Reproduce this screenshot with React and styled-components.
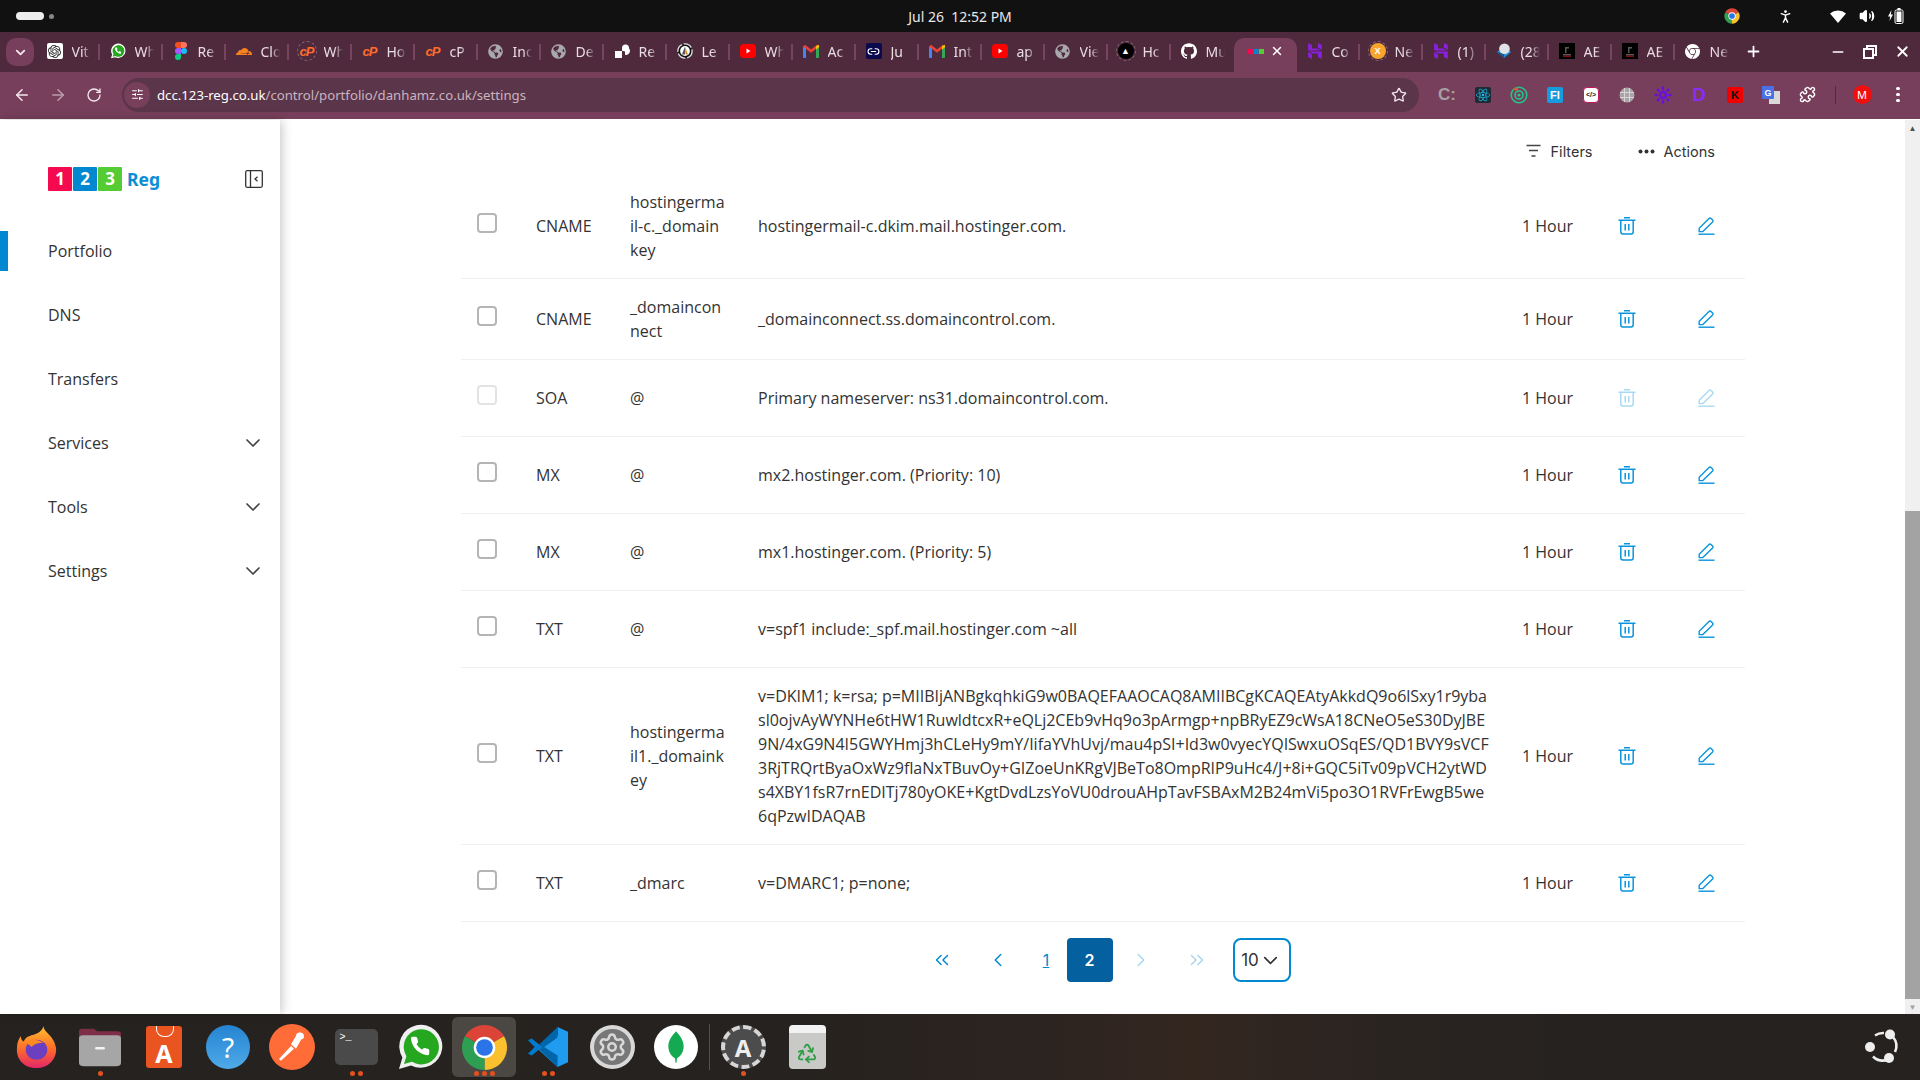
import styled, { createGlobalStyle } from "styled-components"
import { ChevronDown, ChevronLeft, ChevronRight, ChevronsLeft, ChevronsRight, ArrowLeft, ArrowRight, RotateCw, Star, SlidersHorizontal, Plus, Minus, X, Puzzle, Recycle, Settings, Link2, Volume2, PersonStanding, Sun } from "lucide-react"
import { SiOpenai, SiCloudflare, SiGithub, SiHostinger, SiGooglechrome, SiReact } from "react-icons/si"
import { FaGlobeAmericas } from "react-icons/fa"

const GlobalStyle = createGlobalStyle`
    html, body { margin: 0; padding: 0; height: 100%; overflow: hidden; background: #fff; }
    body { font-family: "Open Sans", "Noto Sans", sans-serif; color: #333; }
    * { box-sizing: border-box; }
`

const Screen = styled.div`
    width: 1920px;
    height: 1080px;
    display: flex;
    flex-direction: column;
`

/* ---------- ubuntu top bar ---------- */
const TopBar = styled.div`
    height: 32px;
    background: #111;
    color: #e8e8e8;
    display: grid;
    grid-template-columns: 1fr auto 1fr;
    align-items: center;
    padding: 0 16px;
    font: 14px "Noto Sans", sans-serif;
`
const Workspaces = styled.div`
    display: flex;
    align-items: center;
    gap: 5px;
`
const WorkspacePill = styled.span`
    width: 28px;
    height: 8px;
    border-radius: 4px;
    background: #eee;
`
const WorkspaceDot = styled.span`
    width: 5px;
    height: 5px;
    border-radius: 50%;
    background: #888;
`
const Clock = styled.div`
    white-space: pre;
`
const Tray = styled.div`
    display: flex;
    align-items: center;
    justify-content: flex-end;
    color: #fff;
`
const TrayItem = styled.span`
    display: flex;
    margin-left: ${p => p.$gap}px;
`

/* ---------- chrome tabs ---------- */
const TabStrip = styled.div`
    height: 40px;
    background: #4f2a3d;
    display: flex;
    align-items: flex-end;
    padding-left: 6px;
`
const TabMenu = styled.div`
    width: 28px;
    height: 28px;
    margin: 0 2.5px 6px 0;
    border-radius: 10px;
    background: #773f5b;
    color: #f2e6ec;
    display: flex;
    align-items: center;
    justify-content: center;
`
const Tab = styled.div`
    position: relative;
    width: 63px;
    height: 34px;
    flex: none;
    display: flex;
    align-items: center;
    padding: ${p => (p.$active ? "0 12px 8px 14px" : "0 9px 8px 10px")};
    gap: ${p => (p.$active ? 6 : 9)}px;
    color: #e9dde3;
    font: 14px "Noto Sans", sans-serif;
    border-radius: ${p => (p.$active ? "10px 10px 0 0" : "0")};
    background: ${p => (p.$active ? "#773f5b" : "transparent")};
    &::after {
        content: "";
        display: ${p => (p.$active || p.$last ? "none" : "block")};
        position: absolute;
        right: 0;
        top: 6px;
        height: 16px;
        width: 1.5px;
        background: #774560;
    }
`
const TabTitle = styled.span`
    overflow: hidden;
    white-space: nowrap;
    flex: 1;
    min-width: 0;
    mask-image: linear-gradient(90deg, #000 55%, transparent);
`
const TabClose = styled.span`
    flex: none;
    display: flex;
`
const Fav = styled.span`
    width: 16px;
    height: 16px;
    flex: none;
    display: flex;
    align-items: center;
    justify-content: center;
    color: ${p => p.$color || "#fff"};
    background: ${p => p.$bg || "transparent"};
    border-radius: ${p => (p.$ring ? "50%" : "2px")};
    outline: ${p => (p.$ring ? "1.5px dashed #8b6a7c" : "none")};
    outline-offset: 1px;
    font: bold 9px "Liberation Sans", sans-serif;
`
const CpanelText = styled.span`
    font: italic bold 13px "Liberation Sans", sans-serif;
    letter-spacing: -1px;
    color: #ff6c2c;
`
const NewTab = styled.div`
    width: 32px;
    display: flex;
    justify-content: center;
    color: #fff;
    padding-bottom: 12px;
`
const WindowControls = styled.div`
    margin-left: auto;
    display: flex;
    align-items: center;
    color: #fff;
    padding: 0 2px 12px 0;
`
const WindowButton = styled.span`
    width: 32px;
    display: flex;
    justify-content: center;
`

/* ---------- chrome toolbar ---------- */
const Toolbar = styled.div`
    height: 47px;
    background: #773f5b;
    display: flex;
    align-items: center;
    padding: 0 4px 2px;
    color: #f3e8ed;
`
const NavButton = styled.span`
    width: 36px;
    display: flex;
    justify-content: center;
    opacity: ${p => (p.$dim ? 0.55 : 1)};
`
const Omnibox = styled.div`
    flex: 1;
    height: 34px;
    margin: 0 10px;
    border-radius: 17px;
    background: #5b354a;
    display: flex;
    align-items: center;
    padding: 0 12px 0 2px;
    font: 13.2px "Noto Sans", sans-serif;
    color: #c9b4bf;
`
const SiteInfo = styled.span`
    width: 26px;
    height: 26px;
    border-radius: 50%;
    background: #773f5b;
    display: flex;
    align-items: center;
    justify-content: center;
    color: #fff;
    margin-right: 7px;
`
const UrlHost = styled.span`
    color: #fff;
`
const StarWrap = styled.span`
    margin-left: auto;
    display: flex;
`
const ExtSlot = styled.span`
    width: 36px;
    display: flex;
    justify-content: center;
    align-items: center;
`
const ExtBox = styled.span`
    width: 16px;
    height: 16px;
    display: flex;
    align-items: center;
    justify-content: center;
    background: ${p => p.$bg || "transparent"};
    color: ${p => p.$color || "#fff"};
    border-radius: ${p => p.$radius || 2}px;
    border: ${p => (p.$border ? `1.5px solid ${p.$border}` : "none")};
    font: bold ${p => p.$size || 10}px "Liberation Sans", sans-serif;
    white-space: nowrap;
`
const ToolbarSep = styled.span`
    width: 1px;
    height: 18px;
    margin: 0 8px 0 10px;
    background: #4f2a3d;
`
const Avatar = styled.span`
    width: 19px;
    height: 19px;
    border-radius: 50%;
    background: #f00f0f;
    color: #fff;
    font: 11px "Noto Sans", sans-serif;
    display: flex;
    align-items: center;
    justify-content: center;
`
const MoreDots = styled.span`
    display: flex;
    flex-direction: column;
    gap: 2.5px;
    & > i {
        width: 3.5px;
        height: 3.5px;
        border-radius: 50%;
        background: #fff;
    }
`

/* ---------- page ---------- */
const Page = styled.div`
    flex: 1;
    min-height: 0;
    display: flex;
    background: #fff;
    border-top: 1px solid #fff;
`
const Sidebar = styled.aside`
    width: 280px;
    flex: none;
    background: #fff;
    box-shadow: 2px 0 10px rgba(0, 0, 0, 0.22);
    padding-top: 46px;
    z-index: 1;
`
const SidebarHead = styled.div`
    display: flex;
    align-items: center;
    justify-content: space-between;
    padding: 0 17px 0 48px;
    height: 25px;
    margin-bottom: 28px;
`
const Logo = styled.div`
    display: flex;
    align-items: center;
    gap: 1px;
`
const LogoBox = styled.span`
    width: 24px;
    height: 24px;
    background: ${p => p.$bg};
    color: #fff;
    font: bold 17px "Noto Sans", sans-serif;
    border-radius: 1px;
    display: flex;
    align-items: center;
    justify-content: center;
`
const LogoWord = styled.span`
    margin-left: 4px;
    color: #0a8ed6;
    font: bold 17.5px "Noto Sans", sans-serif;
`
const NavItem = styled.div`
    position: relative;
    height: 64px;
    display: flex;
    align-items: center;
    justify-content: space-between;
    padding: 0 15px 0 48px;
    font-size: 16px;
    color: #333;
    &::before {
        content: "";
        display: ${p => (p.$active ? "block" : "none")};
        position: absolute;
        left: 0;
        top: 12px;
        width: 8px;
        height: 40px;
        background: #0288d1;
    }
`
const Main = styled.main`
    flex: 1;
    min-width: 0;
    padding: 0 160px 0 181px;
`
const FilterBar = styled.div`
    height: 54px;
    padding: 8px 30px 0 0;
    display: flex;
    align-items: center;
    justify-content: flex-end;
    gap: 45px;
    font: 14.5px Inter, sans-serif;
    color: #333;
`
const FilterItem = styled.span`
    display: flex;
    align-items: center;
    gap: ${p => p.$gap}px;
`
const Row = styled.div`
    display: grid;
    grid-template-columns: 75px 94px 128px 764px 64px 81px 79px;
    align-items: center;
    border-bottom: 1px solid #f0f0f0;
    padding: 16px 0;
    font-size: 16px;
    line-height: 24px;
    color: #333;
`
const CheckCell = styled.div`
    padding: 0 0 7px 16px;
    display: flex;
`
const Check = styled.span`
    width: 20px;
    height: 20px;
    border-radius: 4px;
    border: 2px solid ${p => (p.$off ? "#e3e3e3" : "#b5b5b5")};
    background: #fff;
`
const NameCell = styled.div`
    width: 96px;
    word-break: break-all;
`
const ValueCell = styled.div`
    width: 734px;
    word-break: break-all;
`
const ActionCell = styled.div`
    height: 44px;
    display: flex;
    align-items: center;
    justify-content: center;
    color: #0a94dd;
    opacity: ${p => (p.$off ? 0.35 : 1)};
`
const Pager = styled.nav`
    margin-top: 16px;
    padding-right: 2px;
    display: flex;
    justify-content: center;
    align-items: center;
    height: 44px;
    font: 17px Inter, sans-serif;
`
const PageArrow = styled.span`
    width: 56px;
    display: flex;
    justify-content: center;
    color: #0288d1;
    opacity: ${p => (p.$off ? 0.35 : 1)};
`
const PageLink = styled.span`
    width: 41px;
    text-align: center;
    color: #0288d1;
    font-size: 16px;
    text-decoration: underline;
`
const PageCurrent = styled.span`
    width: 46px;
    height: 44px;
    background: #04609f;
    color: #fff;
    font-size: 16px;
    font-weight: 600;
    border-radius: 4px;
    display: flex;
    align-items: center;
    justify-content: center;
`
const PageSize = styled.span`
    width: 58px;
    height: 44px;
    margin-left: 8px;
    border: 2px solid #0288d1;
    border-radius: 8px;
    display: flex;
    align-items: center;
    justify-content: center;
    color: #333;
`
const Scrollbar = styled.div`
    width: 15px;
    flex: none;
    background: #f0f0f0;
    display: flex;
    flex-direction: column;
    align-items: center;
`
const ScrollArrow = styled.span`
    height: 15px;
    margin-top: ${p => (p.$bottom ? "auto" : 0)};
    display: flex;
    align-items: center;
    color: ${p => p.$color || "#505050"};
    font-size: 8px;
`
const ScrollThumb = styled.span`
    width: 100%;
    margin-top: 376px;
    height: 488px;
    background: #a3a3a3;
`

/* ---------- dock ---------- */
const Dock = styled.div`
    height: 66px;
    flex: none;
    display: flex;
    align-items: center;
    padding: 0 18px 0 4px;
    background: linear-gradient(90deg, #25221f 0%, #25221f 40%, #2d2420 55%, #33261f 62%, #2a2421 72%, #25221f 85%);
`
const DockSlot = styled.div`
    position: relative;
    width: 64px;
    height: 60px;
    display: flex;
    align-items: center;
    justify-content: center;
    border-radius: 6px;
    background: ${p => (p.$hover ? "#4b4843" : "transparent")};
`
const DockDots = styled.span`
    position: absolute;
    bottom: 1px;
    left: 0;
    right: 0;
    display: flex;
    justify-content: center;
    gap: 3px;
    & > i {
        width: 5px;
        height: 5px;
        border-radius: 50%;
        background: #e2521f;
    }
`
const DockSep = styled.span`
    width: 1px;
    height: 46px;
    margin: 0 1px;
    background: #55514c;
`
const UbuntuWrap = styled.div`
    margin-left: auto;
    display: flex;
`
const TerminalIcon = styled.span`
    width: 43px;
    height: 36px;
    border-radius: 5px;
    background: #4a4a4a;
    color: #fff;
    font: 10px "Liberation Mono", monospace;
    padding: 3px 0 0 5px;
`
const HelpIcon = styled.span`
    width: 44px;
    height: 44px;
    border-radius: 50%;
    background: linear-gradient(#2583d2, #4faae8);
    color: #fff;
    font: 28px "Noto Sans", sans-serif;
    display: flex;
    align-items: center;
    justify-content: center;
`
const UpdaterIcon = styled.span`
    width: 45px;
    height: 44px;
    border-radius: 50%;
    border: 4px dashed #d6d6d6;
    background: #4c4c4c;
    color: #eee;
    font: bold 24px "Noto Sans", sans-serif;
    display: flex;
    align-items: center;
    justify-content: center;
`
const AppCenterIcon = styled.span`
    position: relative;
    width: 36px;
    height: 42px;
    border-radius: 3px;
    background: #e95420;
    color: #fff;
    font: bold 25px "Noto Sans", sans-serif;
    display: flex;
    align-items: flex-end;
    justify-content: center;
    line-height: 30px;
    &::before {
        content: "";
        position: absolute;
        top: 0;
        left: 10px;
        width: 16px;
        height: 10px;
        border: 1.5px solid #fff;
        border-top: none;
        border-radius: 0 0 8px 8px;
    }
`
const GearIcon = styled.span`
    width: 45px;
    height: 44px;
    border-radius: 50%;
    background: #777;
    border: 4px solid #d8d8d8;
    color: #d8d8d8;
    display: flex;
    align-items: center;
    justify-content: center;
`
const TrashIcon = styled.span`
    width: 37px;
    height: 44px;
    border-radius: 4px;
    background: linear-gradient(#f2f2f2 0 18%, #c9c9c7 18%);
    color: #2f9e44;
    display: flex;
    align-items: flex-end;
    justify-content: center;
    padding-bottom: 5px;
`

/* ---------- drawings ---------- */
const polar = (r, a) => [24 + r * Math.cos((a * Math.PI) / 180), 24 + r * Math.sin((a * Math.PI) / 180)]
const sector = (r, a0, a1) => {
    const [x0, y0] = polar(r, a0)
    const [x1, y1] = polar(r, a1)
    return `M24 24L${x0} ${y0}A${r} ${r} 0 0 1 ${x1} ${y1}Z`
}

function ChromeMark({ size }) {
    return (
        <svg width={size} height={size} viewBox="0 0 48 48">
            <path d={sector(23, -150, -30)} fill="#db4437" />
            <path d={sector(23, -30, 90)} fill="#fbc02d" />
            <path d={sector(23, 90, 210)} fill="#2e9e52" />
            <circle cx="24" cy="24" r="11" fill="#fff" />
            <circle cx="24" cy="24" r="8.5" fill="#2a74e8" />
        </svg>
    )
}

function WhatsappMark({ size, ring }) {
    return (
        <svg width={size} height={size} viewBox="0 0 48 48">
            <path d="M3 46l3.4-11.6A21.5 21.5 0 1 1 15 42.4z" fill={ring ? "#f0f0f0" : "#fff"} />
            <path d="M8 41l2.4-7.8A17.6 17.6 0 1 1 16 38.8z" fill="#25a81f" />
            <g transform="translate(13 12) scale(0.92)">
                <path d="M22 16.92v3a2 2 0 0 1-2.18 2 19.79 19.79 0 0 1-8.63-3.07 19.5 19.5 0 0 1-6-6 19.79 19.79 0 0 1-3.07-8.67A2 2 0 0 1 4.11 2h3a2 2 0 0 1 2 1.72 12.84 12.84 0 0 0 .7 2.81 2 2 0 0 1-.45 2.11L8.09 9.91a16 16 0 0 0 6 6l1.27-1.27a2 2 0 0 1 2.11-.45 12.84 12.84 0 0 0 2.81.7A2 2 0 0 1 22 16.92z" fill="#fff" />
            </g>
        </svg>
    )
}

function FigmaMark() {
    return (
        <svg width="12" height="18" viewBox="0 0 12 18">
            <path d="M3 0h3v6H3a3 3 0 0 1 0-6z" fill="#f24e1e" />
            <path d="M6 0h3a3 3 0 0 1 0 6H6z" fill="#ff7262" />
            <path d="M3 6h3v6H3a3 3 0 0 1 0-6z" fill="#a259ff" />
            <circle cx="9" cy="9" r="3" fill="#1abcfe" />
            <path d="M3 12h3v3a3 3 0 1 1-3-3z" fill="#0acf83" />
        </svg>
    )
}

function RenderMark() {
    return (
        <svg width="16" height="16" viewBox="0 0 16 16">
            <rect x="1" y="8" width="7" height="7" fill="#fff" />
            <path d="M8 8a4 4 0 1 1 3 3.8V8z" fill="#fff" />
            <circle cx="11.5" cy="5" r="3.5" fill="#fff" />
        </svg>
    )
}

function LeMark() {
    return (
        <svg width="18" height="18" viewBox="0 0 18 18">
            <circle cx="9" cy="9" r="8" fill="#111" stroke="#ddd" strokeWidth="1.5" strokeDasharray="10 2" />
            <circle cx="9" cy="9" r="5.5" fill="#fff" />
            <path d="M9 4l3.5 9h-3z" fill="#d98a2b" />
            <path d="M9 4l-3.5 9h3.5z" fill="#555" />
        </svg>
    )
}

function YoutubeMark() {
    return (
        <svg width="16" height="16" viewBox="0 0 16 16">
            <rect y="1" width="16" height="14" rx="3.5" fill="#f00" />
            <path d="M6.5 5.5l4 2.5-4 2.5z" fill="#fff" />
        </svg>
    )
}

function GmailMark() {
    return (
        <svg width="16" height="14" viewBox="0 0 16 14">
            <path d="M0 2.5h3V14H1a1 1 0 0 1-1-1z" fill="#4285f4" />
            <path d="M13 2.5h3V13a1 1 0 0 1-1 1h-2z" fill="#34a853" />
            <path d="M0 2.5L2 .8 8 5.5 14 .8 16 2.5 8 8.8z" fill="#ea4335" />
            <path d="M13 2l3-1.2v2.4L13 5.6z" fill="#fbbc04" />
        </svg>
    )
}

function BlocksMark() {
    return (
        <svg width="16" height="5" viewBox="0 0 16 5">
            <rect width="5" height="5" fill="#f50a4f" />
            <rect x="5.5" width="5" height="5" fill="#0288d1" />
            <rect x="11" width="5" height="5" fill="#55cc33" />
        </svg>
    )
}

function SphereMark() {
    return (
        <svg width="18" height="18" viewBox="0 0 18 18">
            <path d="M1 10l8 7 8-7-3-2H4z" fill="#1f8fd8" />
            <path d="M1 10l8 7V12z" fill="#16567f" />
            <circle cx="9.5" cy="6.5" r="6" fill="#dfe3e6" />
        </svg>
    )
}

function AeMark() {
    return (
        <svg width="16" height="16" viewBox="0 0 16 16">
            <rect width="16" height="16" fill="#000" />
            <path d="M4 11h8v1.5H4zM6 4h1.5v6H6zM7.5 4H10v1.5H7.5z" fill="#5a5a5a" />
            <rect x="4" y="12.5" width="8" height="1.5" fill="#7a1010" />
        </svg>
    )
}

function RestoreMark() {
    return (
        <svg width="14" height="14" viewBox="0 0 14 14" fill="none" stroke="#fff" strokeWidth="2">
            <path d="M4 4V1h9v9h-3" />
            <rect x="1" y="4" width="9" height="9" />
        </svg>
    )
}

function WifiMark() {
    return (
        <svg width="16" height="13" viewBox="0 0 16 13">
            <path d="M0 3.6A12 12 0 0 1 16 3.6L8 13z" fill="#fff" />
        </svg>
    )
}

function BatteryMark() {
    return (
        <svg width="17" height="16" viewBox="0 0 17 16" fill="none">
            <path d="M4.5 2L1 8.5h2.2L2.5 13 6 6.5H3.8z" fill="#fff" />
            <rect x="8" y="2" width="8" height="13.5" rx="1.5" stroke="#fff" />
            <rect x="10.5" y="0" width="3" height="2" fill="#fff" />
            <rect x="9.5" y="3.5" width="5" height="10.5" fill="#fff" />
        </svg>
    )
}

function TargetMark() {
    return (
        <svg width="18" height="18" viewBox="0 0 18 18" fill="none">
            <circle cx="9" cy="9" r="7.8" stroke="#1fc78a" strokeWidth="1.6" />
            <circle cx="9" cy="9" r="4" stroke="#1fc78a" strokeWidth="1.6" />
            <circle cx="9" cy="9" r="1.6" fill="#1fc78a" />
            <path d="M3 3.5a8 8 0 0 1 5-2.3V5z" fill="#e4572e" />
        </svg>
    )
}

function GridGlobeMark() {
    return (
        <svg width="16" height="16" viewBox="0 0 16 16" fill="none">
            <circle cx="8" cy="8" r="7.5" fill="#a9a4a7" />
            <path d="M1 5.5h14M1 10.5h14M5.5 1v14M10.5 1v14" stroke="#d9d5d7" />
        </svg>
    )
}

function TranslateMark() {
    return (
        <svg width="18" height="18" viewBox="0 0 18 18">
            <rect x="7" y="5" width="11" height="13" fill="#d9d9d9" />
            <rect width="12" height="13" rx="1" fill="#4a72e8" />
            <text x="6" y="10" textAnchor="middle" fontSize="9" fontWeight="700" fontFamily="Liberation Sans" fill="#fff">G</text>
        </svg>
    )
}

function TrashMark() {
    return (
        <svg width="18" height="18" viewBox="0 0 18 18" fill="none" stroke="currentColor" strokeWidth="1.5">
            <path d="M.5 3.2h17M6 .8h6M2.8 3.2v11.6a2.2 2.2 0 0 0 2.2 2.2h8a2.2 2.2 0 0 0 2.2-2.2V3.2M7.2 7v6.4M10.8 7v6.4" />
        </svg>
    )
}

function EditMark() {
    return (
        <svg width="17" height="18" viewBox="0 0 17 18" fill="none" stroke="currentColor" strokeWidth="1.4">
            <path d="M.5 17.2h16" />
            <path d="M1.2 14.6v-3.4L11 1.4a1.4 1.4 0 0 1 2 0l1.6 1.6a1.4 1.4 0 0 1 0 2L4.8 14.6z" />
        </svg>
    )
}

function PanelMark() {
    return (
        <svg width="18" height="18" viewBox="0 0 18 18" fill="none" stroke="#333" strokeWidth="1.3">
            <rect x=".7" y=".7" width="16.6" height="16.6" rx="1.5" />
            <path d="M5.5 1v16M12.5 6.8L10 9l2.5 2.2" />
        </svg>
    )
}

function FilterMark() {
    return (
        <svg width="15" height="14" viewBox="0 0 15 14" fill="none" stroke="#444" strokeWidth="1.4">
            <path d="M.5 1.5h14M3 6.5h9M5.5 12h4" />
        </svg>
    )
}

function DotsMark() {
    return (
        <svg width="17" height="5" viewBox="0 0 17 5" fill="#333">
            <circle cx="2.5" cy="2.5" r="2" />
            <circle cx="8.5" cy="2.5" r="2" />
            <circle cx="14.5" cy="2.5" r="2" />
        </svg>
    )
}

function UbuntuMark() {
    return (
        <svg width="38" height="38" viewBox="0 0 38 38" fill="none">
            <path d="M11 7.5A14 14 0 0 1 20 5M29 9a14 14 0 0 1 2 15M24 31.5a14 14 0 0 1-15-3" stroke="#eee" strokeWidth="2.6" />
            <circle cx="26" cy="6.5" r="5" fill="#eee" />
            <circle cx="6" cy="19" r="5" fill="#eee" />
            <circle cx="25" cy="30" r="5" fill="#eee" />
        </svg>
    )
}

function FirefoxMark() {
    return (
        <svg width="43" height="44" viewBox="0 0 44 48" preserveAspectRatio="none">
            <defs>
                <linearGradient id="ffa" x1="0" y1="0" x2="0" y2="1">
                    <stop offset="0" stopColor="#ffc12e" />
                    <stop offset=".55" stopColor="#ff6a2a" />
                    <stop offset="1" stopColor="#e2266b" />
                </linearGradient>
            </defs>
            <path d="M29 1c1 8 11 10 13 24 1 12-8 22-20 22S1 38 2 25c0-6 2-10 4-13 0 3 1 5 3 6 2-5 6-6 9-7 5-2 10-4 11-10z" fill="url(#ffa)" />
            <circle cx="22" cy="27" r="11" fill="#6b3fc0" />
            <path d="M10 18c6-3 13-3 19 2-4-1-9 0-12 4-2-2-5-4-7-6z" fill="#ff8a1f" />
        </svg>
    )
}

function FilesMark() {
    return (
        <svg width="44" height="40" viewBox="0 0 44 48" preserveAspectRatio="none">
            <path d="M1 5a3 3 0 0 1 3-3h12l3 3h21a3 3 0 0 1 3 3v12H1z" fill="#7e2f47" />
            <rect x="1" y="10" width="42" height="37" rx="4" fill="#a6a6a6" />
            <rect x="17" y="24" width="10" height="3" rx="1.5" fill="#f3f3f3" />
        </svg>
    )
}

function PostmanMark() {
    return (
        <svg width="46" height="46" viewBox="0 0 46 50" preserveAspectRatio="none">
            <ellipse cx="23" cy="25" rx="23" ry="25" fill="#ff6c37" />
            <path d="M10 38l12-14 3 3-13 13zM22 22l5-9a4 4 0 1 1 5 4l-5 10z" fill="#fff" />
        </svg>
    )
}

function VsCodeMark() {
    return (
        <svg width="42" height="42" viewBox="0 0 44 44">
            <path d="M32 1l11 5v32l-11 5-20-18 20-15z" fill="#1f9cf0" />
            <path d="M32 1L10 22l22 21V31L18 22l14-10z" fill="#0065a9" />
            <path d="M1 15l4-2 11 9-11 9-4-2 7-7z" fill="#007acc" />
        </svg>
    )
}

function MongoMark() {
    return (
        <svg width="44" height="44" viewBox="0 0 46 50" preserveAspectRatio="none">
            <ellipse cx="23" cy="25" rx="23" ry="25" fill="#fff" />
            <path d="M23 7c4 5 8 10 8 17 0 8-4 12-7 14l-.5 5h-1l-.5-5c-3-2-7-6-7-14 0-7 4-12 8-17z" fill="#13aa52" />
        </svg>
    )
}

const globe = <Fav $color="#a9a9ad"><FaGlobeAmericas size={15} /></Fav>
const hostinger = <Fav $color="#8a1fe0"><SiHostinger size={16} /></Fav>
const cpanel = <Fav><CpanelText>cP</CpanelText></Fav>

const tabs = [
    { title: "Vit", icon: <Fav $bg="#fff" $color="#222"><SiOpenai size={13} /></Fav> },
    { title: "Wh", icon: <Fav><WhatsappMark size={18} /></Fav> },
    { title: "Re", icon: <Fav><FigmaMark /></Fav> },
    { title: "Clo", icon: <Fav $color="#f6821f"><SiCloudflare size={17} /></Fav> },
    { title: "Wh", icon: <Fav $ring><CpanelText>cP</CpanelText></Fav> },
    { title: "Ho", icon: cpanel },
    { title: "cP", icon: cpanel },
    { title: "Inc", icon: globe },
    { title: "De", icon: globe },
    { title: "Re", icon: <Fav><RenderMark /></Fav> },
    { title: "Le", icon: <Fav><LeMark /></Fav> },
    { title: "Wh", icon: <Fav><YoutubeMark /></Fav> },
    { title: "Ac", icon: <Fav><GmailMark /></Fav> },
    { title: "Ju", icon: <Fav $bg="#0b0a4d"><Link2 size={13} color="#fff" /></Fav> },
    { title: "Int", icon: <Fav><GmailMark /></Fav> },
    { title: "ap", icon: <Fav><YoutubeMark /></Fav> },
    { title: "Vie", icon: globe },
    { title: "Hc", icon: <Fav $ring $bg="#000">▲</Fav> },
    { title: "Mu", icon: <Fav><SiGithub size={16} /></Fav> },
    { title: "", icon: <Fav><BlocksMark /></Fav>, active: true },
    { title: "Co", icon: hostinger },
    { title: "Ne", icon: <Fav $ring $bg="#f7a52c">X</Fav> },
    { title: "(1)", icon: hostinger },
    { title: "(28", icon: <Fav><SphereMark /></Fav> },
    { title: "AE", icon: <Fav><AeMark /></Fav> },
    { title: "AE", icon: <Fav><AeMark /></Fav> },
    { title: "Ne", icon: <Fav><SiGooglechrome size={15} /></Fav> },
]

const extensions = [
    <ExtBox $color="#a5a0a3" $size={17}>C:</ExtBox>,
    <ExtBox $bg="#1d2b33" $color="#1fb6e8"><SiReact size={14} /></ExtBox>,
    <TargetMark />,
    <ExtBox $bg="#169bdc" $size={11}>FI</ExtBox>,
    <ExtBox $bg="#fff" $border="#c2185b" $radius={4} $color="#222" $size={7}>{"</>"}</ExtBox>,
    <GridGlobeMark />,
    <Sun size={18} color="#6a0fe0" strokeWidth={3.2} />,
    <ExtBox $color="#8b2cf5" $size={19}>D</ExtBox>,
    <ExtBox $bg="#f00000" $color="#111" $size={11}>K</ExtBox>,
    <TranslateMark />,
    <Puzzle size={17} color="#fff" />,
]

const rows = [
    { type: "CNAME", name: "hostingermail-c._domainkey", value: "hostingermail-c.dkim.mail.hostinger.com." },
    { type: "CNAME", name: "_domainconnect", value: "_domainconnect.ss.domaincontrol.com." },
    { type: "SOA", name: "@", value: "Primary nameserver: ns31.domaincontrol.com.", locked: true },
    { type: "MX", name: "@", value: "mx2.hostinger.com. (Priority: 10)" },
    { type: "MX", name: "@", value: "mx1.hostinger.com. (Priority: 5)" },
    { type: "TXT", name: "@", value: "v=spf1 include:_spf.mail.hostinger.com ~all" },
    {
        type: "TXT",
        name: "hostingermail1._domainkey",
        value: "v=DKIM1; k=rsa; p=MIIBIjANBgkqhkiG9w0BAQEFAAOCAQ8AMIIBCgKCAQEAtyAkkdQ9o6lSxy1r9ybasl0ojvAyWYNHe6tHW1RuwldtcxR+eQLj2CEb9vHq9o3pArmgp+npBRyEZ9cWsA18CNeO5eS30DyJBE9N/4xG9N4I5GWYHmj3hCLeHy9mY/IifaYVhUvj/mau4pSI+Id3w0vyecYQISwxuOSqES/QD1BVY9sVCF3RjTRQrtByaOxWz9flaNxTBuvOy+GIZoeUnKRgVJBeTo8OmpRIP9uHc4/J+8i+GQC5iTv09pVCH2ytWDs4XBY1fsR7rnEDITj780yOKE+KgtDvdLzsYoVU0drouAHpTavFSBAxM2B24mVi5po3O1RVFrEwgB5we6qPzwIDAQAB",
    },
    { type: "TXT", name: "_dmarc", value: "v=DMARC1; p=none;" },
]

const navItems = [
    { label: "Portfolio", active: true },
    { label: "DNS" },
    { label: "Transfers" },
    { label: "Services", more: true },
    { label: "Tools", more: true },
    { label: "Settings", more: true },
]

function App() {
    return (
        <Screen>
            <GlobalStyle />
            <TopBar>
                <Workspaces>
                    <WorkspacePill />
                    <WorkspaceDot />
                </Workspaces>
                <Clock>Jul 26  12:52 PM</Clock>
                <Tray>
                    <TrayItem><ChromeMark size={16} /></TrayItem>
                    <TrayItem $gap={37}><PersonStanding size={17} /></TrayItem>
                    <TrayItem $gap={36}><WifiMark /></TrayItem>
                    <TrayItem $gap={13}><Volume2 size={16} fill="#fff" /></TrayItem>
                    <TrayItem $gap={12}><BatteryMark /></TrayItem>
                </Tray>
            </TopBar>

            <TabStrip>
                <TabMenu><ChevronDown size={15} strokeWidth={3} /></TabMenu>
                {tabs.map((tab, i) => (
                    <Tab key={i} $active={tab.active} $last={i === tabs.length - 1 || tabs[i + 1].active}>
                        {tab.icon}
                        {tab.active
                            ? <TabClose><X size={14} color="#fff" strokeWidth={2.5} /></TabClose>
                            : <TabTitle>{tab.title}</TabTitle>}
                    </Tab>
                ))}
                <NewTab><Plus size={17} strokeWidth={2.5} /></NewTab>
                <WindowControls>
                    <WindowButton><Minus size={16} strokeWidth={2.5} /></WindowButton>
                    <WindowButton><RestoreMark /></WindowButton>
                    <WindowButton><X size={17} strokeWidth={2.5} /></WindowButton>
                </WindowControls>
            </TabStrip>

            <Toolbar>
                <NavButton><ArrowLeft size={18} /></NavButton>
                <NavButton $dim><ArrowRight size={18} /></NavButton>
                <NavButton><RotateCw size={16} /></NavButton>
                <Omnibox>
                    <SiteInfo><SlidersHorizontal size={13} /></SiteInfo>
                    <UrlHost>dcc.123-reg.co.uk</UrlHost>/control/portfolio/danhamz.co.uk/settings
                    <StarWrap><Star size={16} color="#f3e8ed" /></StarWrap>
                </Omnibox>
                {extensions.map((ext, i) => <ExtSlot key={i}>{ext}</ExtSlot>)}
                <ToolbarSep />
                <ExtSlot><Avatar>M</Avatar></ExtSlot>
                <ExtSlot><MoreDots><i /><i /><i /></MoreDots></ExtSlot>
            </Toolbar>

            <Page>
                <Sidebar>
                    <SidebarHead>
                        <Logo>
                            <LogoBox $bg="#f50a4f">1</LogoBox>
                            <LogoBox $bg="#0288d1">2</LogoBox>
                            <LogoBox $bg="#55cc33">3</LogoBox>
                            <LogoWord>Reg</LogoWord>
                        </Logo>
                        <PanelMark />
                    </SidebarHead>
                    {navItems.map(item => (
                        <NavItem key={item.label} $active={item.active}>
                            {item.label}
                            {item.more && <ChevronDown size={24} color="#444" strokeWidth={1.7} />}
                        </NavItem>
                    ))}
                </Sidebar>

                <Main>
                    <FilterBar>
                        <FilterItem $gap={10}><FilterMark />Filters</FilterItem>
                        <FilterItem $gap={9}><DotsMark />Actions</FilterItem>
                    </FilterBar>
                    {rows.map((row, i) => (
                        <Row key={i}>
                            <CheckCell><Check $off={row.locked} /></CheckCell>
                            <div>{row.type}</div>
                            <NameCell>{row.name}</NameCell>
                            <ValueCell>{row.value}</ValueCell>
                            <div>1 Hour</div>
                            <ActionCell $off={row.locked}><TrashMark /></ActionCell>
                            <ActionCell $off={row.locked}><EditMark /></ActionCell>
                        </Row>
                    ))}
                    <Pager>
                        <PageArrow><ChevronsLeft size={22} strokeWidth={1.6} /></PageArrow>
                        <PageArrow><ChevronLeft size={22} strokeWidth={1.6} /></PageArrow>
                        <PageLink>1</PageLink>
                        <PageCurrent>2</PageCurrent>
                        <PageArrow $off><ChevronRight size={22} strokeWidth={1.6} /></PageArrow>
                        <PageArrow $off><ChevronsRight size={22} strokeWidth={1.6} /></PageArrow>
                        <PageSize>10<ChevronDown size={23} strokeWidth={1.7} /></PageSize>
                    </Pager>
                </Main>

                <Scrollbar>
                    <ScrollArrow>▲</ScrollArrow>
                    <ScrollThumb />
                    <ScrollArrow $bottom $color="#a3a3a3">▼</ScrollArrow>
                </Scrollbar>
            </Page>

            <Dock>
                <DockSlot><FirefoxMark /></DockSlot>
                <DockSlot><FilesMark /><DockDots><i /></DockDots></DockSlot>
                <DockSlot><AppCenterIcon>A</AppCenterIcon></DockSlot>
                <DockSlot><HelpIcon>?</HelpIcon></DockSlot>
                <DockSlot><PostmanMark /></DockSlot>
                <DockSlot><TerminalIcon>{">_"}</TerminalIcon><DockDots><i /><i /></DockDots></DockSlot>
                <DockSlot><WhatsappMark size={48} ring /></DockSlot>
                <DockSlot $hover><ChromeMark size={47} /><DockDots><i /><i /><i /></DockDots></DockSlot>
                <DockSlot><VsCodeMark /><DockDots><i /><i /></DockDots></DockSlot>
                <DockSlot><GearIcon><Settings size={30} /></GearIcon></DockSlot>
                <DockSlot><MongoMark /></DockSlot>
                <DockSep />
                <DockSlot><UpdaterIcon>A</UpdaterIcon><DockDots><i /></DockDots></DockSlot>
                <DockSlot><TrashIcon><Recycle size={22} /></TrashIcon></DockSlot>
                <UbuntuWrap><UbuntuMark /></UbuntuWrap>
            </Dock>
        </Screen>
    )
}

export default App
